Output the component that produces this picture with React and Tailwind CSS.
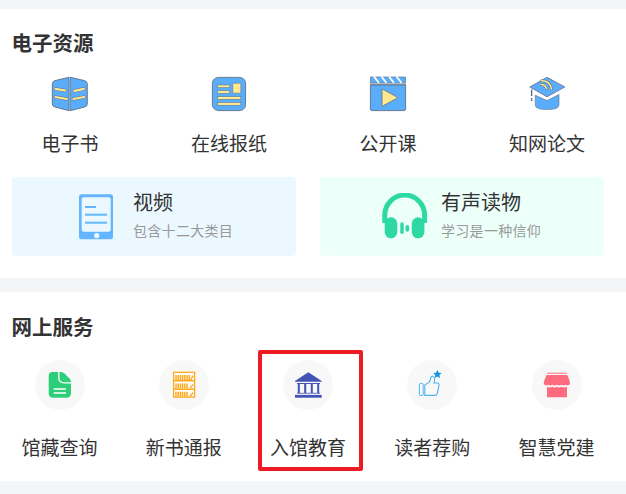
const Y = "#FFE88F";
const B = "#5AADFB";
const S = "#5C6F86";

function IconBook() {
  return (
    <svg width="40" height="38" viewBox="50 75 40 38">
      <path d="M69 77.3 L55 80.6 Q52.3 81.3 52.3 84 V104 Q52.3 106.4 55 107 L69 110.7 Z" fill={B} stroke={S} strokeWidth="0.9" strokeLinejoin="round" />
      <path d="M70.2 77.3 L84.6 80.6 Q87.3 81.3 87.3 84 V104 Q87.3 106.4 84.6 107 L70.2 110.7 Z" fill={B} stroke={S} strokeWidth="0.9" strokeLinejoin="round" />
      <g stroke={S} strokeWidth="3" strokeLinecap="round">
        <path d="M55.5 88.8 L65.2 90.5 M55.5 97 L66.8 99 M74.4 90.8 L83.8 88.8 M73.4 99 L84.2 97" />
      </g>
      <g stroke={Y} strokeWidth="2.2" strokeLinecap="round">
        <path d="M55.5 88.8 L65.2 90.5 M55.5 97 L66.8 99 M74.4 90.8 L83.8 88.8 M73.4 99 L84.2 97" />
      </g>
    </svg>
  );
}

function IconPaper() {
  return (
    <svg width="40" height="38" viewBox="209 75 40 38">
      <rect x="212.4" y="77.4" width="33.2" height="33.2" rx="6" fill={B} stroke={S} strokeWidth="0.9" />
      <g fill={Y} stroke={S} strokeWidth="0.5">
        <rect x="217.5" y="85" width="12" height="2.6" />
        <rect x="217.5" y="90.6" width="12" height="2.6" />
        <rect x="232.8" y="83.3" width="8" height="9.9" rx="1.2" />
        <rect x="217.5" y="96.7" width="23.3" height="2.6" />
        <rect x="217.5" y="102.6" width="23.3" height="2.6" />
      </g>
    </svg>
  );
}

function IconClap() {
  return (
    <svg width="40" height="38" viewBox="368 75 40 38">
      <rect x="370.4" y="77" width="35.2" height="6" fill={B} stroke={S} strokeWidth="0.6" />
      <path d="M374 76.5 L379 83 M381.5 76.5 L386.5 83 M389 76.5 L394 83 M396.5 76.5 L401.5 83" stroke="#fff" strokeWidth="1.8" />
      <rect x="370" y="83.4" width="36" height="1.6" fill="#9aa7b4" />
      <path d="M370.4 85 H405.6 V109 Q405.6 110.6 404 110.6 H372 Q370.4 110.6 370.4 109 Z" fill={B} stroke={S} strokeWidth="0.9" />
      <path d="M382 90 Q382 88.8 383.2 89.5 L396.6 96.8 Q397.6 97.6 396.6 98.4 L383.2 105.8 Q382 106.4 382 105.2 Z" fill={Y} stroke={S} strokeWidth="0.8" />
    </svg>
  );
}

function IconCap() {
  return (
    <svg width="40" height="38" viewBox="527 75 40 38">
      <path d="M547 77.3 L564.8 87 L547 96.8 L529.8 87 Z" fill={B} stroke={S} strokeWidth="0.8" strokeLinejoin="round" />
      <path d="M535.3 95.2 L547 100.6 L559 94.4 V105 Q559 109.5 547 109.6 Q535.3 109.5 535.3 105 Z" fill={B} stroke={S} strokeWidth="0.6" strokeLinejoin="round" />
      <path d="M531.6 89.5 V96 M531.6 98 V101" stroke={S} strokeWidth="1.4" />
      <g fill="none" stroke={S} strokeWidth="2.4" strokeLinecap="round">
        <path d="M541 84.5 Q545 84 546.5 88.5 M541.5 80.8 Q550 80.6 551.5 89" />
      </g>
      <g fill="none" stroke={Y} strokeWidth="1.5" strokeLinecap="round">
        <path d="M541 84.5 Q545 84 546.5 88.5 M541.5 80.8 Q550 80.6 551.5 89" />
      </g>
    </svg>
  );
}

function IconTablet() {
  return (
    <svg width="34" height="46" viewBox="79 194 34 46">
      <rect x="79" y="194.3" width="34" height="45" rx="2.5" fill="#64B5FF" />
      <rect x="81.7" y="197.3" width="29" height="34.4" rx="2" fill="#ECF8FF" />
      <rect x="85" y="206" width="11" height="2" fill="#64B5FF" />
      <rect x="85" y="213.7" width="22" height="2" fill="#64B5FF" />
      <rect x="85" y="221.7" width="22" height="2" fill="#64B5FF" />
      <circle cx="96.7" cy="235.6" r="2.7" fill="#ECF8FF" />
    </svg>
  );
}

function IconPhones() {
  return (
    <svg width="47" height="47" viewBox="381 194 47 47">
      <path d="M384.8 224 V216 A19.9 19.9 0 0 1 424.6 216 V224" fill="none" stroke="#2DD8A3" strokeWidth="5" />
      <rect x="384.7" y="218.3" width="12.6" height="21" rx="6.3" fill="#2DD8A3" />
      <rect x="411.8" y="218.3" width="12.6" height="21" rx="6.3" fill="#2DD8A3" />
      <rect x="400.3" y="223.3" width="3.4" height="11.7" rx="1.7" fill="#2DD8A3" />
      <rect x="405.5" y="226" width="3.6" height="6.7" rx="1.8" fill="#2DD8A3" />
    </svg>
  );
}

function IconDoc() {
  return (
    <svg width="30" height="30" viewBox="44 370 30 30">
      <path d="M51.5 372 H60 Q62 372 63.5 373.5 L68.5 378.5 Q70 380 70 382 V393 Q70 397.7 65.5 397.7 H52 Q47.7 397.7 47.7 393 V376 Q47.7 372 51.5 372 Z" fill="#2CCF77" />
      <path d="M57.8 371.5 V377.5 Q57.8 382.8 63 382.8 H70.5" fill="none" stroke="#fff" strokeWidth="1.3" />
      <path d="M52.7 389 H65 M52.7 393 H65" stroke="#fff" strokeWidth="1.6" />
    </svg>
  );
}

function IconShelf() {
  return (
    <svg width="30" height="30" viewBox="169 370 30 30">
      <rect x="173.6" y="372.3" width="21" height="24.8" fill="#fff" stroke="#FFA81C" strokeWidth="1.3" />
      <path d="M173.6 380.8 H194.6 M173.6 389.2 H194.6" stroke="#FFA81C" strokeWidth="1.6" />
      <g stroke="#FFA81C" strokeWidth="1.5">
        <path d="M176 375 V380 M178.2 375 V380 M180.4 375 V380 M182.6 375 V380 M184.8 375 V380 M187 375 V380 M189.2 375 V380 M193 375.6 L190.8 380" />
        <path d="M176 383.4 V388.4 M178.2 383.4 V388.4 M180.4 383.4 V388.4 M182.6 383.4 V388.4 M184.8 383.4 V388.4 M187 383.4 V388.4 M193 384.4 L190 388.4" />
        <path d="M176 391.8 V396.5 M178.2 391.8 V396.5 M180.4 391.8 V396.5 M182.6 391.8 V396.5 M184.8 391.8 V396.5 M187 391.8 V396.5 M193 392.6 L190 396.5" />
      </g>
    </svg>
  );
}

function IconBank() {
  return (
    <svg width="30" height="30" viewBox="293 370 30 30">
      <path d="M308.3 372.3 L321.7 381 V381.8 H295 V381 Z" fill="#4353B5" />
      <path d="M297 383.5 H320" stroke="#4353B5" strokeWidth="1" />
      <path d="M298.8 384 V393 M305.2 384 V393 M311.8 384 V393 M318.2 384 V393" stroke="#4353B5" strokeWidth="2" />
      <path d="M297 393.3 H320" stroke="#4353B5" strokeWidth="0.8" />
      <rect x="295" y="394.9" width="26.7" height="2.8" fill="#4353B5" />
    </svg>
  );
}

function IconThumb() {
  return (
    <svg width="30" height="30" viewBox="417 370 30 30">
      <rect x="419.4" y="383.6" width="3.8" height="11.8" rx="0.8" fill="none" stroke="#4DB4F0" strokeWidth="1" />
      <path d="M424.8 385 L428.8 382.4 Q430.6 380.6 430.8 377.6 Q431.4 375.6 433.2 376.4 Q435 377.6 434.6 380 L434 383 H437.4 Q439.4 383.2 439 385.4 L437.2 393.6 Q436.6 395.4 435 395.4 H424.8 Z" fill="none" stroke="#4DB4F0" strokeWidth="1.1" strokeLinejoin="round" />
      <path d="M437.4 370 L438.7 372.8 L441.7 373.1 L439.4 375.1 L440.1 378.1 L437.4 376.5 L434.7 378.1 L435.4 375.1 L433.1 373.1 L436.1 372.8 Z" fill="#1296DB" />
    </svg>
  );
}

function IconShop() {
  return (
    <svg width="30" height="30" viewBox="541 370 30 30">
      <rect x="546" y="372.7" width="20" height="1" fill="#FF6B7E" />
      <path d="M545.6 375 H566.2 Q569 380 569 384 Q567 386.4 565 384.8 Q562.8 386.4 560.5 384.8 Q558 386.4 555.8 384.8 Q553.5 386.4 551.4 384.8 Q549.3 386.4 547 384.8 Q545 386.4 542.7 384 Q542.9 380 545.6 375 Z" fill="#FF6B7E" />
      <path d="M546 386.7 Q548.5 388 551.4 386.8 Q553.5 388 555.8 386.8 Q558 388 560.5 386.8 Q563 388 566 386.7 V397.3 H546 Z" fill="#FF6B7E" />
    </svg>
  );
}

const top = [
  [IconBook, "电子书"],
  [IconPaper, "在线报纸"],
  [IconClap, "公开课"],
  [IconCap, "知网论文"],
];

const services = [
  [IconDoc, "馆藏查询"],
  [IconShelf, "新书通报"],
  [IconBank, "入馆教育"],
  [IconThumb, "读者荐购"],
  [IconShop, "智慧党建"],
];

function Title({ children }) {
  return <h2 className="pl-[11.5px] text-[20.5px] leading-[28px] font-bold text-[#333]">{children}</h2>;
}

function Card({ Icon, title, sub, bg, pad, gap }) {
  return (
    <div className={`flex h-[79px] w-[284px] items-center rounded ${bg} ${pad} ${gap}`}>
      <Icon />
      <div className="-mt-[6px]">
        <div className="text-[20px] leading-[28px] text-[#333]">{title}</div>
        <div className="mt-[4px] text-[14px] leading-[20px] tracking-[0.3px] text-[#999]">{sub}</div>
      </div>
    </div>
  );
}

export default function App() {
  return (
    <div
      className="relative h-[494px] w-[626px] overflow-hidden bg-[#F4F5F7] pt-[9px]"
      style={{ fontFamily: '"Noto Sans CJK SC", sans-serif' }}
    >
      <section className="h-[269px] bg-white pt-[19px]">
        <Title>电子资源</Title>
        <div className="mt-[19px] flex justify-between pl-[30px] pr-[39px]">
          {top.map(([Icon, label]) => (
            <div key={label} className="flex w-[80px] flex-col items-center">
              <Icon />
              <div className="mt-[16px] text-[19px] leading-[28px] whitespace-nowrap text-[#333]">{label}</div>
            </div>
          ))}
        </div>
        <div className="mt-[20px] flex gap-[24px] px-3">
          <Card Icon={IconTablet} title="视频" sub="包含十二大类目" bg="bg-[#ECF8FF]" pad="pl-[67px]" gap="gap-[20px]" />
          <Card Icon={IconPhones} title="有声读物" sub="学习是一种信仰" bg="bg-[#ECFFF9]" pad="pl-[61px]" gap="gap-[13px]" />
        </div>
      </section>
      <section className="mt-[14px] h-[189px] bg-white pt-[20px]">
        <Title>网上服务</Title>
        <div className="mt-[20px] flex justify-between pl-[19.5px] pr-[29.5px]">
          {services.map(([Icon, label]) => (
            <div key={label} className="flex w-[80px] flex-col items-center">
              <div className="flex h-[50px] w-[50px] items-center justify-center rounded-full bg-[#F8F8F8]">
                <Icon />
              </div>
              <div className="mt-[23px] text-[19px] leading-[28px] whitespace-nowrap text-[#333]">{label}</div>
            </div>
          ))}
        </div>
      </section>
      <div className="absolute top-[350px] left-[258px] h-[121px] w-[105px] rounded-[2px] border-4 border-[#ED1C24]" />
    </div>
  );
}
